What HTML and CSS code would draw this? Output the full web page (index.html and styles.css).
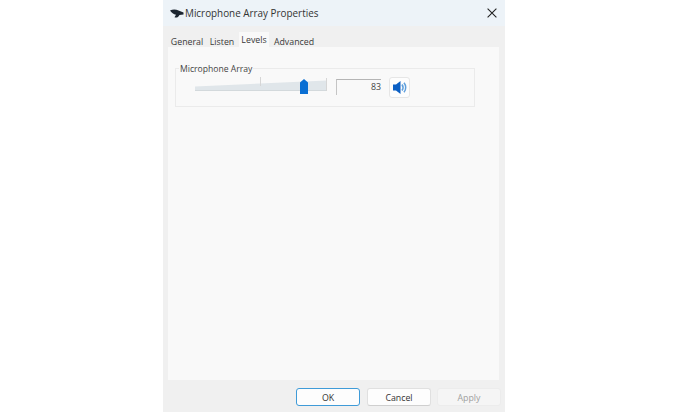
FILE: index.html
```html
<!DOCTYPE html>
<html lang="en">
<head>
<meta charset="utf-8">
<title>Microphone Array Properties</title>
<link rel="stylesheet" href="styles.css">
</head>
<body>
<div class="window">
  <header class="titlebar">
    <svg class="mic-icon" width="14" height="9" viewBox="0 0 14 9"><path d="M0 1.500C2.500 .2 6 .2 8.500 1.500L13.500 3.500V5.500L9.500 6C8.500 8.200 6.500 9 4.500 8.300L6 5.800C3.500 5.200 1.500 3.800 0 1.500Z" fill="#1c2530"/></svg>
    <span class="title">Microphone Array Properties</span>
    <svg class="close" width="10" height="10" viewBox="0 0 10 10"><path d="M.6.6 9.400 9.400M9.400.6.6 9.400" stroke="#222" stroke-width="1.100" fill="none"/></svg>
  </header>
  <nav class="tabs">
    <span class="tab t1">General</span>
    <span class="tab t2">Listen</span>
    <span class="tab active">Levels</span>
    <span class="tab t4">Advanced</span>
  </nav>
  <main class="panel">
    <fieldset class="group">
      <legend>Microphone Array</legend>
      <div class="row">
        <div class="slider">
          <svg class="wedge" width="132" height="17" viewBox="0 0 132 17"><path d="M0 7.500 L132 1.500 V12H0Z" fill="#e0e6ea"/><path d="M0 11.500H132" stroke="#d3d9dc"/><path d="M65.500 -2V7M131.500 -1V12" stroke="#d6d6d6"/></svg>
          <svg class="thumb" width="8" height="15" viewBox="0 0 8 15"><path d="M0 3.500 4 0 8 3.500V15H0Z" fill="#0a6fd3"/></svg>
        </div>
        <div class="value">83</div>
        <button class="mute">
          <svg width="14" height="13" viewBox="0 0 14 13"><path d="M0 3.500H3L7.500 0V13L3 9.500H0Z" fill="#0b5fc4"/><path d="M9 3.500C10.200 5.200 10.200 7.800 9 9.500M11 1.800C13.200 4.500 13.200 8.500 11 11.200" stroke="#5f9fdc" stroke-width="1.600" fill="none"/></svg>
        </button>
      </div>
    </fieldset>
  </main>
  <footer class="buttons">
    <button class="btn primary">OK</button>
    <button class="btn">Cancel</button>
    <button class="btn disabled">Apply</button>
  </footer>
</div>
</body>
</html>
```
FILE: styles.css
```css
html, body { margin: 0; padding: 0; background: #fff; }
body { width: 700px; height: 412px; overflow: hidden; font-family: "Open Sans", "Noto Sans", sans-serif; color: #333; }
.window { box-sizing: border-box; width: 342px; height: 412px; margin-left: 163px; background: #f0f0f0; display: flex; flex-direction: column; border-radius: 3px 3px 0 0; }
.titlebar { height: 26px; flex: none; background: #edf3f8; display: flex; align-items: center; padding: 0 8px 0 7px; }
.mic-icon { flex: none; }
.title { margin-left: 1px; font-size: 9.900px; color: #333; flex: 1; }
.close { flex: none; }
.tabs { height: 21px; flex: none; display: flex; align-items: flex-end; padding-left: 7px; }
.tab { font-size: 8.800px; height: 13px; line-height: 16px; text-align: center; color: #3a3a3a; white-space: nowrap; }
.t1 { width: 34px; }
.t2 { width: 30px; margin-left: 3px; }
.active { width: 30px; height: 15px; line-height: 16px; background: #f9f9f9; margin-left: 2px; }
.t4 { width: 42px; margin-left: 4px; }
.panel { flex: 1; background: #f9f9f9; margin: 0 6px 0 5px; padding: 14px 24px 0 7px; }
.group { box-sizing: border-box; margin: 0; height: 46px; padding: 0 0 0 19px; border: 1px solid #ebebeb; min-width: 0; }
.group legend { font-size: 8.600px; line-height: 12px; padding: 2px 1px 0; margin-left: -16px; color: #444; }
.row { display: flex; align-items: center; height: 26px; margin-top: -1px; }
.slider { position: relative; width: 132px; height: 17px; flex: none; }
.wedge { display: block; overflow: visible; }
.thumb { position: absolute; left: 105px; top: 0; }
.value { box-sizing: border-box; width: 45px; height: 16px; margin-left: 9px; border-top: 1px solid #b5b5b5; border-left: 1px solid #c5c5c5; font-size: 8.800px; line-height: 14px; text-align: right; color: #444; }
.mute { box-sizing: border-box; width: 21px; height: 21px; margin-left: 8px; padding: 0; background: #fdfdfd; border: 1px solid #e6e6e6; border-radius: 3px; display: flex; align-items: center; justify-content: center; }
.buttons { box-sizing: border-box; height: 32px; flex: none; display: flex; padding: 8px 0 0 133px; gap: 6px; }
.btn { box-sizing: border-box; width: 64px; height: 18px; padding: 1px 0 0; background: #fdfdfd; border: 1px solid #e0e0e0; border-bottom-color: #cfcfcf; border-radius: 3px; font: 8.800px "Open Sans", "Noto Sans", sans-serif; color: #333; }
.primary { border: 1.300px solid #3f9bd8; margin-right: 1px; }
.disabled { background: #f5f5f5; border-color: #ececec; color: #a0a0a0; }
```
